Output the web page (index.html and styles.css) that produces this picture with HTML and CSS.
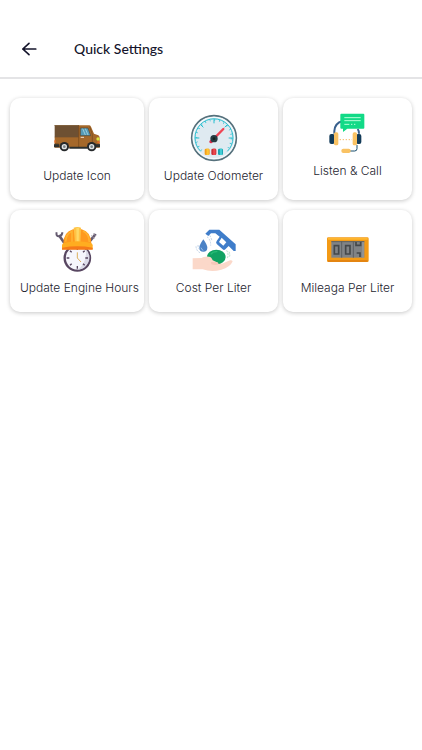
FILE: index.html
```html
<!DOCTYPE html>
<html lang="en">
<head>
    <meta charset="UTF-8">
    <meta name="viewport" content="width=device-width, initial-scale=1.0">
    <title>Quick Settings</title>
    <link rel="stylesheet" href="styles.css">
</head>
<body>
    <header class="top-bar">
        <button type="button" class="back-btn" aria-label="Back">
            <svg viewBox="0 0 16 16" fill="none" stroke="#14142b" stroke-width="1.500" stroke-linecap="round" stroke-linejoin="round">
                <path d="M14 8H2.500M8 3L2.500 8 8 13"/>
            </svg>
        </button>
        <h1>Quick Settings</h1>
    </header>

    <main class="settings-grid">
        <button type="button" class="card">
            <!-- van -->
            <svg class="icon" viewBox="22 9 150 150">
                <path d="M100 46h33q4 0 6 4l9 21 13 5q4 2 4 7v30H30V80h70z" fill="#a5682a"/>
                <path d="M30 45h72v37H30z" fill="#6e5032"/>
                <path d="M30 45h72v3H30z" fill="#80613e"/>
                <path d="M102 46v65M135 50l8 23v38" stroke="#754719" stroke-width="2" fill="none"/>
                <path d="M107 54h23l8 23h-31z" fill="#559bb7" stroke="#53432e" stroke-width="2"/>
                <path d="M114 56l8 19M122 56l8 19" stroke="#9bccda" stroke-width="3"/>
                <path d="M30 100h12v4H30M145 101h20v4h-20" fill="#7d4d20"/>
                <path d="M28 103h16v9H28zM74 110h55v6H74zM151 103h15v9h-15z" fill="#2d302f"/>
                <path d="M108 82h10" stroke="#f0ded0" stroke-width="3"/>
                <circle cx="160" cy="87" r="5" fill="#dce43b"/>
                <path d="M158 94h7v6h-7zM29 91h4v7h-4z" fill="#e96d27"/>
                <circle cx="59" cy="110" r="14" fill="#26292b"/>
                <circle cx="59" cy="110" r="8" fill="#e1e4e5"/>
                <circle cx="59" cy="110" r="4" fill="#7c8386"/>
                <circle cx="141" cy="110" r="14" fill="#26292b"/>
                <circle cx="141" cy="110" r="8" fill="#e1e4e5"/>
                <circle cx="141" cy="110" r="4" fill="#7c8386"/>
            </svg>
            <span class="label">Update Icon</span>
        </button>

        <button type="button" class="card">
            <!-- gauge -->
            <svg class="icon" viewBox="11 9 150 150">
                <circle cx="86" cy="84" r="67" fill="#dfeaf1" stroke="#56717c" stroke-width="5"/>
                <circle cx="86" cy="84" r="62" fill="none" stroke="#f4fafc" stroke-width="4"/>
                <path d="M46 124A57 57 0 1 1 126 124" fill="none" stroke="#28bfd0" stroke-width="3"/>
                <path d="M49 121A53 53 0 1 1 123 121" fill="none" stroke="#28bfd0" stroke-width="6" stroke-dasharray="2 12"/>
                <path d="M30 84h12M86 28v12M130 84h12M46 44l8 8M126 44l-8 8" stroke="#28bfd0" stroke-width="3"/>
                <path d="M77 95L114 57" stroke="#f04454" stroke-width="7" stroke-linecap="round"/>
                <circle cx="77" cy="95" r="5" fill="#d92e4d"/>
                <circle cx="86" cy="86" r="11" fill="#263c43"/>
                <circle cx="86" cy="86" r="4" fill="#14231d"/>
                <rect x="58" y="116" width="15" height="19" rx="4" fill="#f49d18"/>
                <path d="M67 116v19" stroke="#ffc735" stroke-width="7"/>
                <rect x="78" y="116" width="15" height="19" rx="4" fill="#c92e38"/>
                <path d="M87 116v19" stroke="#ec494f" stroke-width="7"/>
                <rect x="98" y="116" width="15" height="19" rx="4" fill="#16a2b1"/>
                <path d="M107 116v19" stroke="#43cdd5" stroke-width="7"/>
            </svg>
            <span class="label">Update Odometer</span>
        </button>

        <button type="button" class="card">
            <!-- headset with chat bubble -->
            <svg class="icon icon-small" viewBox="15 24 135 135">
                <path d="M43 86V78Q45 54 67 49M113 72q4 5 4 14" fill="none" stroke="#38608d" stroke-width="6"/>
                <path d="M111 120v11q0 7-7 7H90" fill="none" stroke="#174c6c" stroke-width="3"/>
                <rect x="28" y="87" width="16" height="30" rx="6" fill="#123b59"/>
                <rect x="108" y="87" width="16" height="30" rx="6" fill="#123b59"/>
                <rect x="42" y="82" width="13" height="39" rx="5" fill="#f9c263"/>
                <rect x="98" y="82" width="13" height="39" rx="5" fill="#f9c263"/>
                <rect x="64" y="131" width="28" height="13" rx="6" fill="#f9c263"/>
                <path d="M59 104h37" stroke="#f9b866" stroke-width="3" stroke-dasharray="4 5"/>
                <path d="M64 26h66q3 0 3 3v39q0 3-3 3H82L69 81V71h-5q-3 0-3-3V29q0-3 3-3z" fill="#12da87"/>
                <path d="M73 38h49M73 47h49M73 58h15M93 58h4M102 58h4" stroke="#b7ffd9" stroke-width="3"/>
            </svg>
            <span class="label">Listen &amp; Call</span>
        </button>

        <button type="button" class="card">
            <!-- hard hat over a clock -->
            <svg class="icon" viewBox="6 9 150 150">
                <path d="M27 40l16 23M137 36l-16 20" stroke="#655b70" stroke-width="8"/>
                <path d="M20 31q-3 11 7 12 10-1 10-12" fill="none" stroke="#655b70" stroke-width="6"/>
                <path d="M124 41l9 8M130 35l8 7" stroke="#938899" stroke-width="3"/>
                <circle cx="82" cy="108" r="38" fill="#f6f6fc" stroke="#584761" stroke-width="7"/>
                <path d="M108 82A36 36 0 0 1 82 143Q111 126 108 82z" fill="#dcdbe8"/>
                <path d="M82 77v7M82 132v8M50 108h8M106 108h8M60 86l5 5M60 130l5-5M104 130l-5-5M104 86l-5 5" stroke="#584761" stroke-width="4"/>
                <path d="M82 91v17l11 12" fill="none" stroke="#ddb05d" stroke-width="3"/>
                <path d="M40 66q0-36 29-44h26q29 8 29 44z" fill="#ff991e"/>
                <path d="M47 59q1-24 19-31v35M99 27q18 8 19 33" fill="none" stroke="#ffb230" stroke-width="5"/>
                <path d="M71 17q11-4 22 0l-2 47H75z" fill="#ffc244"/>
                <path d="M79 17h8l-1 45h-6z" fill="#ffd966"/>
                <path d="M41 63q41-10 82 0 5 2 5 7v12H36V70q0-5 5-7z" fill="#ffad20"/>
                <path d="M36 77q46-8 92 0v6H36z" fill="#f67a19"/>
            </svg>
            <span class="label">Update Engine Hours</span>
        </button>

        <button type="button" class="card">
            <!-- fuel nozzle, drop and hand -->
            <svg class="icon" viewBox="1 0 150 150">
                <path d="M50 26L62 14h30l49 44v20h-6l-15-15-10 10q-4 4-8 0L85 58q-5-5-1-10l9-13-13-10H67l-8 8z" fill="#3f7dca"/>
                <path d="M99 38l14 14-9 10-13-11z" fill="#fff"/>
                <path d="M44 43q12 17 12 25a12 12 0 0 1-24 0q0-8 12-25z" fill="#4b82c5"/>
                <path d="M37 68q2 7 7 8" fill="none" stroke="#9bc2eb" stroke-width="3"/>
                <path d="M22 64q1 14 12 19M55 35q12 10 11 27M28 60q0 9 5 14M63 31q5 8 7 17" fill="none" stroke="#a5bedd" stroke-width="2" stroke-dasharray="6 3"/>
                <path d="M12 100l26-1 28-5 34 22 24-10q6-1 8 3-7 18-34 25-29 8-56-1H12z" fill="#fbd8c9"/>
                <ellipse cx="83" cy="96" rx="28" ry="22" fill="#10a262"/>
                <path d="M66 88q7-9 20-8" fill="none" stroke="#27bc76" stroke-width="4"/>
                <path d="M35 101q13-8 26-6 8 1 11 11l13 6q4 3 1 7l-20 1-25-5z" fill="#fbd8c9"/>
                <path d="M67 111h16q6 0 7 6-8 5-22 1" fill="#f5c8b9"/>
                <path d="M114 76q7 12 2 24M121 80q4 9 1 17" fill="none" stroke="#92ceb0" stroke-width="2" stroke-dasharray="6 3"/>
            </svg>
            <span class="label">Cost Per Liter</span>
        </button>

        <button type="button" class="card">
            <!-- mileage counter -->
            <svg class="icon" viewBox="2 0 150 150">
                <rect x="14" y="37" width="125" height="74" rx="4" fill="#f39a16"/>
                <path d="M17 39h119v5H17z" fill="#ffb62e"/>
                <path d="M17 106h119v4H17z" fill="#df7e11"/>
                <rect x="27" y="49" width="99" height="49" fill="#808386"/>
                <path d="M58 49v49M93 49v49M27 50h99" stroke="#5c6063" stroke-width="3"/>
                <path d="M36 62h13v25H36zM70 62h13v25H70z" fill="none" stroke="#44484b" stroke-width="5"/>
                <path d="M101 51v10h14V51M103 84h10v12" fill="none" stroke="#44484b" stroke-width="5"/>
                <path d="M122 51v47" stroke="#a0a3a5" stroke-width="3"/>
            </svg>
            <span class="label">Mileaga Per Liter</span>
        </button>
    </main>
</body>
</html>
```
FILE: styles.css
```css
* {
    margin: 0;
    padding: 0;
    box-sizing: border-box;
}

body {
    font-family: Inter, Roboto, sans-serif;
    background: #fff;
    color: #25252f;
    min-height: 100vh;
}

button {
    border: none;
    background: none;
    font: inherit;
    color: inherit;
    cursor: pointer;
}

/* Header */
.top-bar {
    display: flex;
    align-items: center;
    gap: 36px;
    padding: 36px 20px 15px;
    border-bottom: 2px solid #e4e4e6;
}

.back-btn {
    display: flex;
    align-items: center;
    width: 18px;
    height: 26px;
}

.back-btn svg {
    width: 18px;
    height: 18px;
}

.top-bar h1 {
    font-family: Lato, sans-serif;
    font-size: 14px;
    line-height: 26px;
    font-weight: 500;
    color: #14142b;
}

/* Cards */
.settings-grid {
    display: grid;
    grid-template-columns: 134fr 129fr 129fr;
    gap: 10px 5px;
    padding: 19px 10px;
}

.card {
    display: flex;
    flex-direction: column;
    align-items: center;
    gap: 5px;
    min-width: 0;
    min-height: 102px;
    padding: 15px 10px;
    background: #fff;
    border-radius: 10px;
    box-shadow: 0 1px 4px rgba(0, 0, 0, 0.22);
}

.card:hover {
    box-shadow: 0 2px 8px rgba(0, 0, 0, 0.3);
}

.icon {
    width: 50px;
    height: 50px;
}

.icon-small {
    width: 45px;
    height: 45px;
}

.label {
    width: 100%;
    font-size: 12px;
    line-height: 16px;
    font-weight: 300;
    text-align: center;
    white-space: nowrap;
}
```
